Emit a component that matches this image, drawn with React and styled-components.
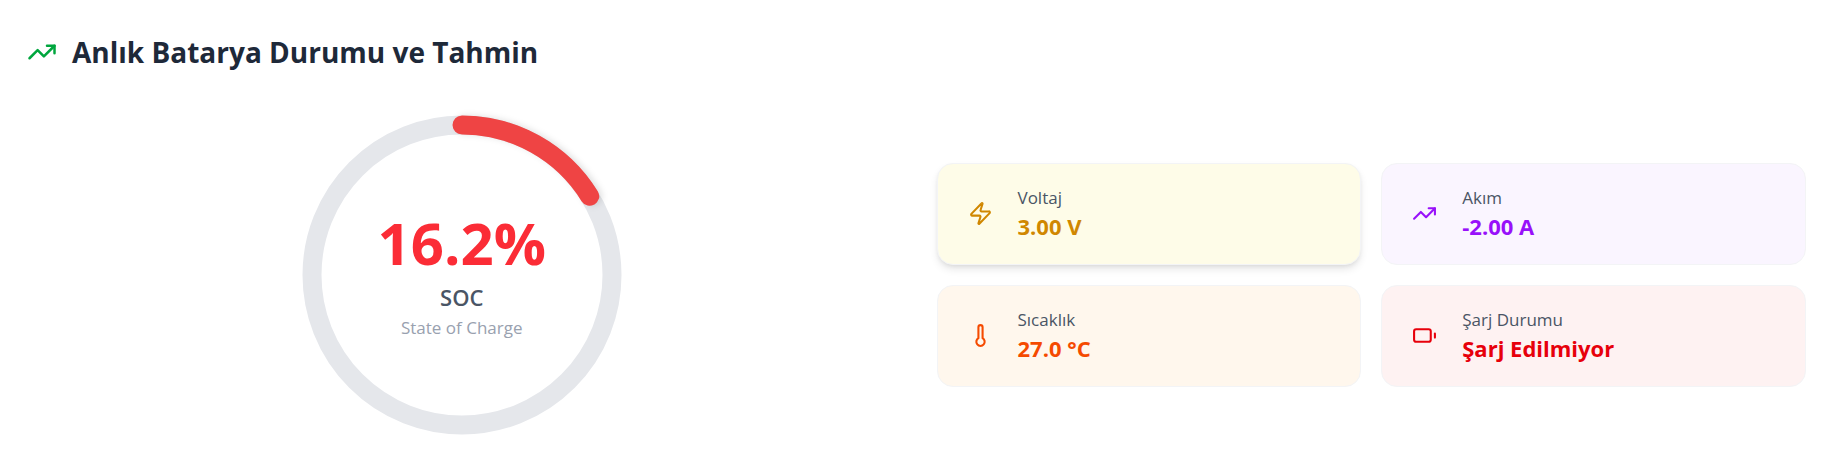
import React from "react";
import styled, { createGlobalStyle } from "styled-components";
import { TrendingUp, Zap, Thermometer, Battery } from "lucide-react";

const GlobalStyle = createGlobalStyle`
  *, *::before, *::after { box-sizing: border-box; }
  body {
    margin: 0;
    background: #ffffff;
    font-family: "Open Sans", "Noto Sans", sans-serif;
  }
  h2, p, dl, dt, dd { margin: 0; }
`;

const Panel = styled.section`
  padding: 28px 25px 32px 27px;
`;

const Header = styled.header`
  display: flex;
  align-items: center;
  gap: 15px;
`;

const HeaderIcon = styled(TrendingUp)`
  flex: none;
  color: #00a63e;
`;

const Title = styled.h2`
  font-size: 28px;
  line-height: 48px;
  font-weight: 700;
  color: #1e2939;
`;

const Content = styled.div`
  display: grid;
  grid-template-columns: repeat(2, minmax(0, 1fr));
  align-items: center;
  gap: 40px;
  margin-top: 39px;
`;

const Gauge = styled.div`
  display: grid;
  place-items: center;

  > * { grid-area: 1 / 1; }
`;

const Ring = styled.svg`
  display: block;
  width: 320px;
  height: 320px;
  overflow: visible;
`;

/* The arc is rotated a quarter turn, so a downward shadow falls to the right. */
const Progress = styled.circle`
  filter: drop-shadow(0 3px 3px rgba(0, 0, 0, 0.12));
`;

const Reading = styled.div`
  padding-top: 6px;
  text-align: center;
`;

const Percent = styled.p`
  font-size: 58px;
  line-height: 60px;
  font-weight: 700;
  color: #fb2c36;
`;

const Soc = styled.p`
  margin-top: 8px;
  font-size: 22px;
  line-height: 32px;
  font-weight: 600;
  color: #4a5565;
`;

const Caption = styled.p`
  font-size: 17px;
  line-height: 30px;
  color: #99a1af;
`;

const Cards = styled.dl`
  display: grid;
  grid-template-columns: repeat(2, minmax(0, 1fr));
  gap: 20px;
`;

const Card = styled.div`
  display: flex;
  align-items: center;
  gap: 25px;
  padding: 21px 30px 23px;
  border: 1px solid #f3f4f6;
  border-radius: 16px;
  background: ${(p) => p.$background};
  color: ${(p) => p.$color};
  box-shadow: ${(p) =>
    p.$raised
      ? "0 5px 8px -1px rgba(0, 0, 0, 0.1), 0 2px 5px -2px rgba(0, 0, 0, 0.1)"
      : "none"};

  > svg { flex: none; }
`;

const Label = styled.dt`
  font-size: 17px;
  line-height: 26px;
  font-weight: 500;
  color: #4a5565;
`;

const Value = styled.dd`
  font-size: 22px;
  line-height: 30px;
  font-weight: 700;
`;

const METRICS = [
  { label: "Voltaj", value: "3.00 V", icon: Zap, color: "#d08700", background: "#fefce8", raised: true },
  { label: "Akım", value: "-2.00 A", icon: TrendingUp, color: "#9810fa", background: "#faf5ff" },
  { label: "Sıcaklık", value: "27.0 °C", icon: Thermometer, color: "#f54a00", background: "#fff7ed" },
  { label: "Şarj Durumu", value: "Şarj Edilmiyor", icon: Battery, color: "#e7000b", background: "#fef2f2" },
];

function SocGauge({ value }) {
  return (
    <Gauge>
      <Ring viewBox="0 0 320 320" aria-hidden="true">
        <circle cx="160" cy="160" r="150" fill="none" stroke="#e5e7eb" strokeWidth="19" />
        <Progress
          cx="160"
          cy="160"
          r="150"
          fill="none"
          stroke="#ef4444"
          strokeWidth="19"
          strokeLinecap="round"
          pathLength="100"
          strokeDasharray={`${value} 100`}
          transform="rotate(-90 160 160)"
        />
      </Ring>
      <Reading>
        <Percent>{value.toFixed(1)}%</Percent>
        <Soc>SOC</Soc>
        <Caption>State of Charge</Caption>
      </Reading>
    </Gauge>
  );
}

export default function App() {
  return (
    <>
      <GlobalStyle />
      <Panel>
        <Header>
          <HeaderIcon size={30} aria-hidden="true" />
          <Title>Anlık Batarya Durumu ve Tahmin</Title>
        </Header>
        <Content>
          <SocGauge value={16.2} />
          <Cards>
            {METRICS.map(({ label, value, icon: Icon, color, background, raised }) => (
              <Card key={label} $color={color} $background={background} $raised={raised}>
                <Icon size={25} aria-hidden="true" />
                <div>
                  <Label>{label}</Label>
                  <Value>{value}</Value>
                </div>
              </Card>
            ))}
          </Cards>
        </Content>
      </Panel>
    </>
  );
}
